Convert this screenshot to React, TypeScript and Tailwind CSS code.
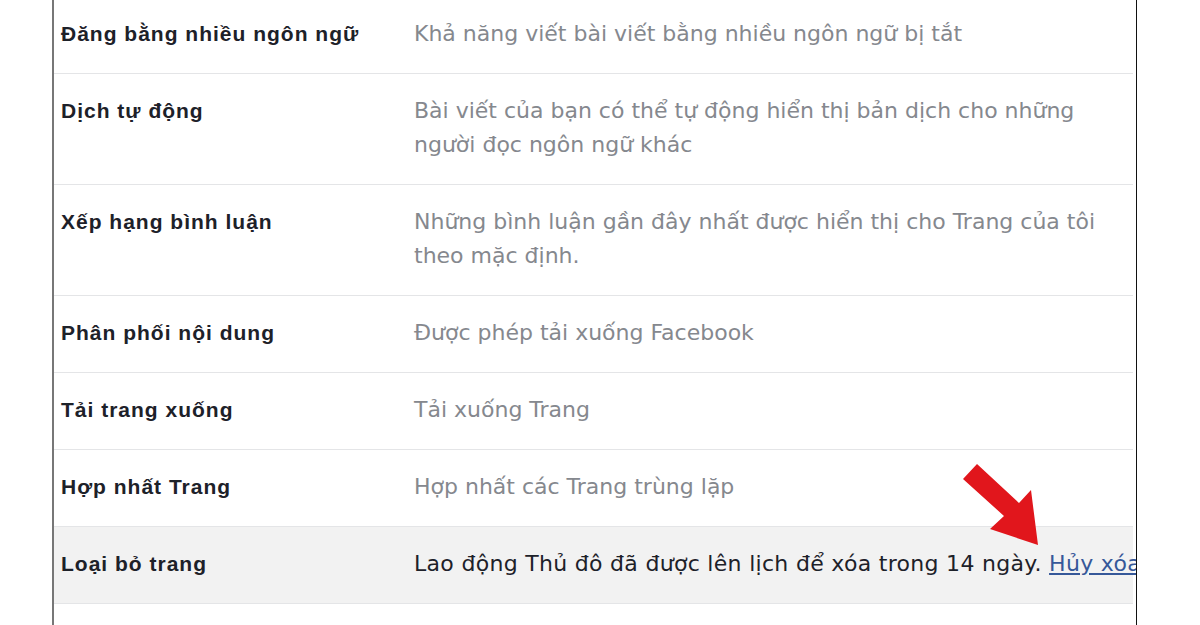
import React from 'react';

type Row = {
  label: string;
  value: React.ReactNode;
  highlight?: boolean;
};

const rows: Row[] = [
  { label: 'Đăng bằng nhiều ngôn ngữ', value: 'Khả năng viết bài viết bằng nhiều ngôn ngữ bị tắt' },
  {
    label: 'Dịch tự động',
    value: 'Bài viết của bạn có thể tự động hiển thị bản dịch cho những người đọc ngôn ngữ khác',
  },
  {
    label: 'Xếp hạng bình luận',
    value: 'Những bình luận gần đây nhất được hiển thị cho Trang của tôi theo mặc định.',
  },
  { label: 'Phân phối nội dung', value: 'Được phép tải xuống Facebook' },
  { label: 'Tải trang xuống', value: 'Tải xuống Trang' },
  { label: 'Hợp nhất Trang', value: 'Hợp nhất các Trang trùng lặp' },
  {
    label: 'Loại bỏ trang',
    highlight: true,
    value: (
      <span className="whitespace-nowrap tracking-[0.3px] text-[#1d2129]">
        Lao động Thủ đô đã được lên lịch để xóa trong 14 ngày.{' '}
        <a href="#" className="text-[#365899] underline">
          Hủy xóa
        </a>
      </span>
    ),
  },
  { label: 'Quản lý quyền truy cập', value: 'Những người có quyền' },
];

function RedArrow() {
  return (
    <svg
      className="pointer-events-none absolute left-[955px] top-[455px]"
      width="95"
      height="100"
      viewBox="955 455 95 100"
    >
      <polygon
        points="977,464 1019,503 1031,490 1038,545 990,529 1004,516 963,479"
        fill="#e1161c"
      />
    </svg>
  );
}

export default function App() {
  return (
    <div className="relative h-[625px] w-[1200px] overflow-hidden bg-white">
      <div className="ml-[52px] h-full w-[1085px] overflow-hidden border-l-2 border-r border-l-[#777777] border-r-[#111111]">
        {rows.map((row, i) => (
          <div
            key={row.label}
            className={`mr-[3px] flex border-b border-[#e4e5e7] pb-[22px] ${
              i === 0 ? 'pt-[17px]' : 'pt-[20px]'
            } ${row.highlight ? 'bg-[#f2f2f2]' : ''}`}
          >
            <div className="w-[360px] shrink-0 pl-[7px] font-['Liberation_Sans',Arial,sans-serif] text-[21px] font-bold leading-[34px] tracking-[1px] text-[#1d2129]">
              {row.label}
            </div>
            <div className="min-w-0 flex-1 pr-[16px] font-['DejaVu_Sans',Verdana,sans-serif] text-[22px] leading-[34px] text-[#85888e]">
              {row.value}
            </div>
          </div>
        ))}
      </div>
      <RedArrow />
    </div>
  );
}
